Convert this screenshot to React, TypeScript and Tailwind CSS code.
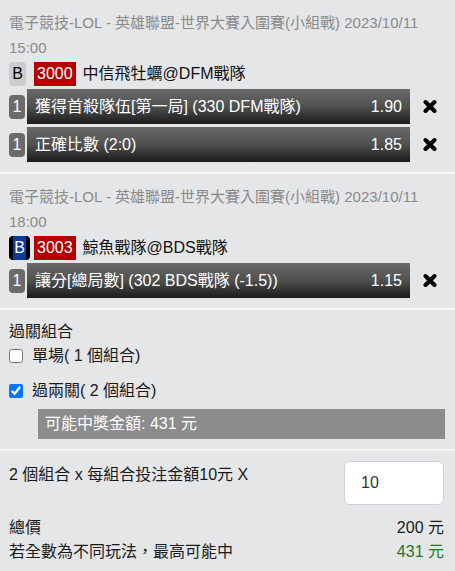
import React from "react";

type Bet = { label: string; odds: string };

type Match = {
  header: string;
  dark: boolean;
  code: string;
  teams: string;
  bets: Bet[];
};

const matches: Match[] = [
  {
    header: "電子競技-LOL - 英雄聯盟-世界大賽入圍賽(小組戰) 2023/10/11 15:00",
    dark: false,
    code: "3000",
    teams: "中信飛牡蠣@DFM戰隊",
    bets: [
      { label: "獲得首殺隊伍[第一局] (330 DFM戰隊)", odds: "1.90" },
      { label: "正確比數 (2:0)", odds: "1.85" },
    ],
  },
  {
    header: "電子競技-LOL - 英雄聯盟-世界大賽入圍賽(小組戰) 2023/10/11 18:00",
    dark: true,
    code: "3003",
    teams: "鯨魚戰隊@BDS戰隊",
    bets: [{ label: "讓分[總局數] (302 BDS戰隊 (-1.5))", odds: "1.15" }],
  },
];

function CloseIcon() {
  return (
    <svg width="14" height="15" viewBox="0 0 14 15" className="shrink-0">
      <path d="M2.5 3 L11.5 12 M11.5 3 L2.5 12" stroke="#000" strokeWidth="4" strokeLinecap="round" />
    </svg>
  );
}

function MatchBlock({ m }: { m: Match }) {
  return (
    <div className="pt-[10px] pb-[10px] pl-[9px] border-b-2 border-[#f4f4f5]">
      <div className="text-[15px] leading-[25px] text-[#8a8a8a] pr-[30px]">{m.header}</div>
      <div className="flex items-center mt-px h-[25px]">
        {m.dark ? (
          <span className="w-[21px] h-6 rounded-[4px] bg-[#0a3a9e] border-x-[4px] border-black text-white text-[16px] leading-6 flex items-center justify-center">
            B
          </span>
        ) : (
          <span className="w-[17px] h-6 rounded-[4px] bg-[#cdcdcd] text-black text-[16px] leading-6 flex items-center justify-center">
            B
          </span>
        )}
        <span
          className={
            m.dark
              ? "ml-[4px] h-6 px-[3px] bg-[#b30000] text-white text-[16px] leading-6 flex items-center"
              : "ml-[8px] h-6 px-[3px] bg-[#b30000] text-white text-[16px] leading-6 flex items-center"
          }
        >
          {m.code}
        </span>
        <span className="ml-[7px] text-[16px] leading-6 text-[#111]">{m.teams}</span>
      </div>
      <div className="flex flex-col gap-[3px] mt-[3px] pr-[18px]">
        {m.bets.map((b, i) => (
          <div key={i} className="flex items-center">
            <span className="w-4 h-6 rounded-[4px] bg-[#6b6b6b] text-white text-[16px] leading-6 flex items-center justify-center shrink-0">
              1
            </span>
            <div className="ml-[2px] flex-1 h-[35px] bg-linear-to-b from-[#6a6a6a] via-[#505050] to-[#1c1c1c] flex items-center justify-between pl-2 pr-2 text-white text-[16px]">
              <span>{b.label}</span>
              <span>{b.odds}</span>
            </div>
            <span className="ml-[13px]">
              <CloseIcon />
            </span>
          </div>
        ))}
      </div>
    </div>
  );
}

export default function App() {
  return (
    <div
      className="w-[455px] h-[571px] overflow-hidden bg-[#e5e6e8] text-[#1a1a1a]"
      style={{ fontFamily: '"Liberation Sans", "Noto Sans CJK TC", sans-serif' }}
    >
      {matches.map((m, i) => (
        <MatchBlock key={i} m={m} />
      ))}

      <div className="pt-[10px] pb-[10px] pl-[9px] pr-[10px] border-b-2 border-[#f4f4f5] text-[16px]">
        <div className="leading-6">過關組合</div>
        <label className="flex items-center h-[23px]">
          <input type="checkbox" className="w-[14px] h-[14px] m-0" />
          <span className="ml-[9px] leading-6">單場( 1 個組合)</span>
        </label>
        <label className="flex items-center h-[23px] mt-[12px]">
          <input type="checkbox" defaultChecked className="w-[14px] h-[14px] m-0" />
          <span className="ml-[9px] leading-6">過兩關( 2 個組合)</span>
        </label>
        <div className="ml-[29px] mt-[7px] h-[30px] bg-[#8c8c8c] text-white flex items-center px-[7px]">
          可能中獎金額: 431 元
        </div>
      </div>

      <div className="pt-[10px] pl-[9px] pr-[11px] text-[16px]">
        <div className="flex items-start justify-between">
          <span className="leading-6 mt-[2px]">2 個組合 x 每組合投注金額10元 X</span>
          <input
            defaultValue="10"
            className="w-[100px] h-[44px] rounded-[6px] border border-[#cfd3d9] bg-white pl-4 text-[16px] text-[#333] outline-none"
          />
        </div>
        <div className="flex justify-between leading-6 mt-[11px]">
          <span>總價</span>
          <span>200 元</span>
        </div>
        <div className="flex justify-between leading-6">
          <span>若全數為不同玩法，最高可能中</span>
          <span className="text-[#227a22]">431 元</span>
        </div>
      </div>
    </div>
  );
}
